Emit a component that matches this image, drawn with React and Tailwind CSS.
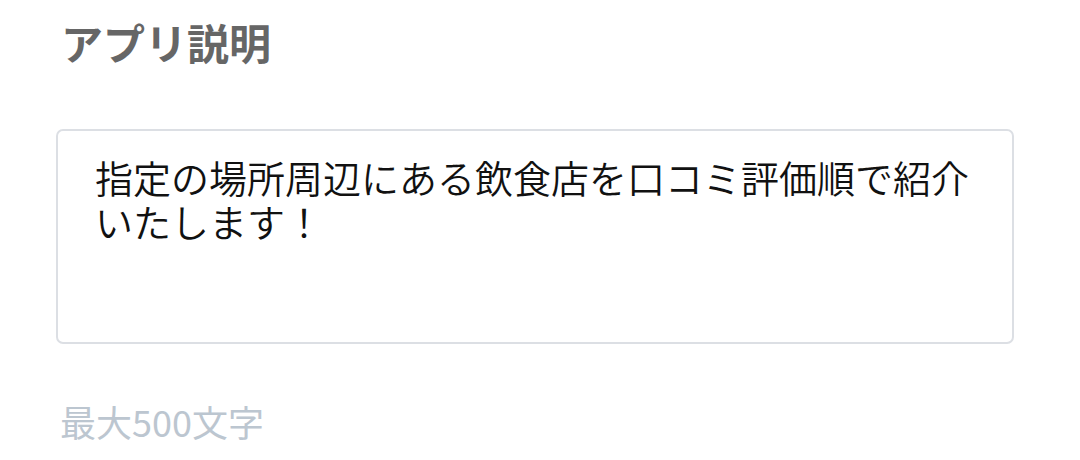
const FONT = "font-['Noto_Sans_CJK_JP','Noto_Sans',sans-serif]";

export default function App() {
  return (
    <div className={`w-[1080px] h-[460px] bg-white ${FONT}`}>
      <div className="pl-[56px] pr-[66px]">
        {/* Label */}
        <h2 className="pt-[18px] pl-[5px] text-[42px] leading-[48px] font-bold text-[#666666]">
          アプリ説明
        </h2>

        {/* Description box */}
        <div className="mt-[63px] h-[215px] rounded-[7px] border-2 border-[#dcdfe4] pl-[37px] pr-[20px] pt-[24px]">
          <p className="text-[38px] leading-[44px] font-[350] text-[#111111]">
            指定の場所周辺にある飲食店を口コミ評価順で紹介いたします！
          </p>
        </div>

        {/* Counter */}
        <p className="mt-[56px] pl-[4px] text-[36px] leading-[42px] text-[#bcc6d0]">
          最大500文字
        </p>
      </div>
    </div>
  );
}
